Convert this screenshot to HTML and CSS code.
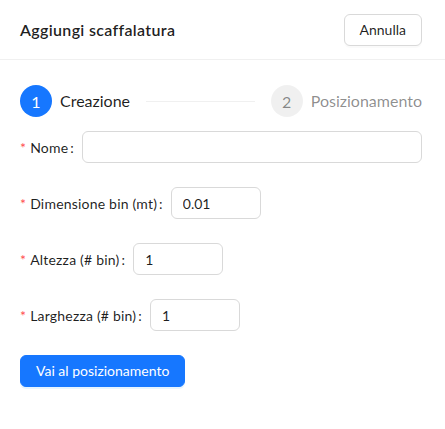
FILE: index.html
```html
<!DOCTYPE html>
<html lang="it">
<head>
<meta charset="utf-8">
<link rel="stylesheet" href="styles.css">
</head>
<body>
<div class="drawer">
  <div class="header">
    <div class="title">Aggiungi scaffalatura</div>
    <button class="btn">Annulla</button>
  </div>
  <div class="body">
    <div class="steps">
      <div class="step step-active">
        <span class="step-icon">1</span>
        <span class="step-title">Creazione</span>
      </div>
      <div class="step step-wait">
        <span class="step-icon">2</span>
        <span class="step-title">Posizionamento</span>
      </div>
    </div>
    <form class="form">
      <div class="form-item">
        <label class="label"><span class="req">*</span>Nome<span class="colon">:</span></label>
        <input class="input input-wide" type="text" value="">
      </div>
      <div class="form-item">
        <label class="label"><span class="req">*</span>Dimensione bin (mt)<span class="colon">:</span></label>
        <input class="input input-num" type="text" value="0.01">
      </div>
      <div class="form-item">
        <label class="label"><span class="req">*</span>Altezza (# bin)<span class="colon">:</span></label>
        <input class="input input-num" type="text" value="1">
      </div>
      <div class="form-item">
        <label class="label"><span class="req">*</span>Larghezza (# bin)<span class="colon">:</span></label>
        <input class="input input-num" type="text" value="1">
      </div>
      <button type="button" class="btn btn-primary">Vai al posizionamento</button>
    </form>
  </div>
</div>
</body>
</html>
```

FILE: styles.css
```css
* { box-sizing: border-box; }
html, body {
  margin: 0;
  padding: 0;
  background: #fff;
  font-family: "Lato", "Noto Sans", sans-serif;
  color: rgba(0,0,0,0.88);
  font-size: 14px;
}
.drawer {
  width: 445px;
  height: 429px;
}
.header {
  height: 60px;
  display: flex;
  align-items: center;
  justify-content: space-between;
  padding: 0 23px 0 20px;
  border-bottom: 1px solid #f0f0f0;
}
.title {
  font-size: 16px;
  font-weight: 600;
  line-height: 24px;
  letter-spacing: 0.33px;
}
.btn {
  font-family: inherit;
  font-size: 14px;
  height: 32px;
  padding: 4px 15px;
  border-radius: 6px;
  border: 1px solid #d9d9d9;
  background: #fff;
  color: rgba(0,0,0,0.88);
  line-height: 22px;
  box-shadow: 0 2px 0 rgba(0,0,0,0.02);
  cursor: pointer;
}
.btn-primary {
  background: #1677ff;
  border-color: #1677ff;
  color: #fff;
  box-shadow: 0 2px 0 rgba(5,145,255,0.1);
}
.body {
  padding: 25px 23px 20px 20px;
}
.steps {
  display: flex;
  align-items: center;
  margin-bottom: 14px;
}
.step {
  display: flex;
  align-items: center;
}
.step-active {
  flex: 1;
}
.step-wait {
  margin-left: 16px;
}
.step-icon {
  width: 32px;
  height: 32px;
  border-radius: 50%;
  display: flex;
  align-items: center;
  justify-content: center;
  font-size: 16px;
  margin-right: 8px;
  flex: none;
}
.step-active .step-icon {
  background: #1677ff;
  color: #fff;
}
.step-wait .step-icon {
  background: rgba(0,0,0,0.06);
  color: rgba(0,0,0,0.45);
}
.step-title {
  font-size: 16px;
  line-height: 32px;
}
.step-active .step-title {
  flex: 1;
  display: flex;
  align-items: center;
  color: rgba(0,0,0,0.88);
}
.step-active .step-title::after {
  content: "";
  flex: 1;
  height: 1px;
  background: rgba(5,5,5,0.06);
  margin-left: 16px;
}
.step-wait .step-title {
  color: rgba(0,0,0,0.45);
}
.form {
  display: flex;
  flex-direction: column;
  align-items: flex-start;
}
.form-item {
  display: flex;
  align-items: center;
  margin-bottom: 24px;
  width: 100%;
}
.label {
  display: flex;
  align-items: center;
  height: 32px;
  flex: none;
  font-size: 14px;
  white-space: nowrap;
  letter-spacing: 0.2px;
}
.req {
  color: #ff4d4f;
  margin-right: 4px;
  font-size: 14px;
}
.colon {
  margin: 0 8px 0 2px;
}
.input {
  height: 32px;
  padding: 4px 11px;
  border: 1px solid #d9d9d9;
  border-radius: 6px;
  font-family: inherit;
  font-size: 14px;
  color: rgba(0,0,0,0.88);
  background: #fff;
  outline: none;
}
.input-wide {
  flex: 1;
  min-width: 0;
}
.input-num {
  width: 90px;
}
```
